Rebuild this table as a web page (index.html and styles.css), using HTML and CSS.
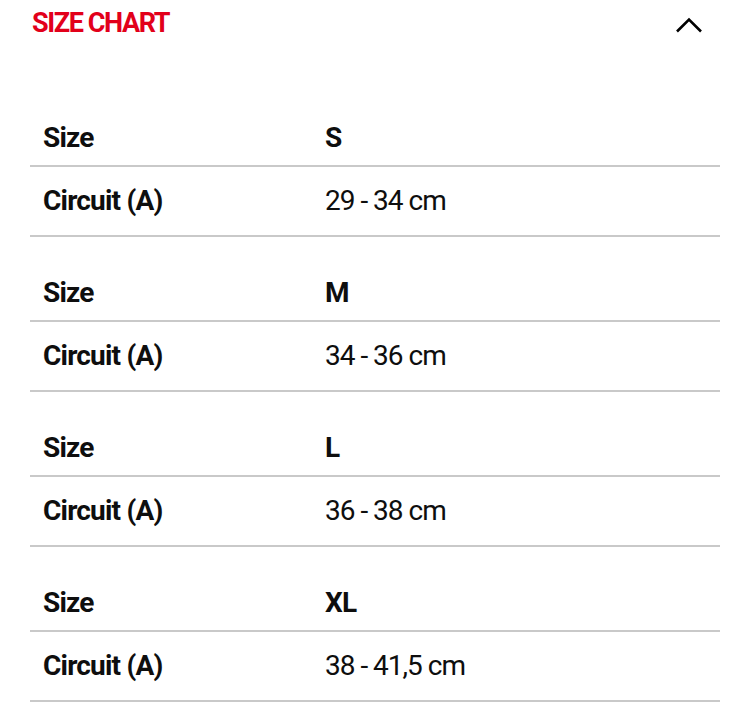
FILE: index.html
```html
<!DOCTYPE html>
<html>
<head>
<meta charset="utf-8">
<link rel="stylesheet" href="styles.css">
</head>
<body>
<div class="panel">
  <div class="head">
    <h2 class="title">SIZE CHART</h2>
    <svg class="chev" width="30" height="20" viewBox="0 0 30 20"><path d="M3 15.5 L15 3.5 L27 15.5" fill="none" stroke="#000" stroke-width="2.6" stroke-linecap="butt" stroke-linejoin="miter"/></svg>
  </div>
  <div class="table">
    <div class="group">
      <div class="row size"><span class="label">Size</span><span class="val strong">S</span></div>
      <div class="row circ"><span class="label">Circuit (A)</span><span class="val">29 - 34 cm</span></div>
    </div>
    <div class="group">
      <div class="row size"><span class="label">Size</span><span class="val strong">M</span></div>
      <div class="row circ"><span class="label">Circuit (A)</span><span class="val">34 - 36 cm</span></div>
    </div>
    <div class="group">
      <div class="row size"><span class="label">Size</span><span class="val strong">L</span></div>
      <div class="row circ"><span class="label">Circuit (A)</span><span class="val">36 - 38 cm</span></div>
    </div>
    <div class="group">
      <div class="row size"><span class="label">Size</span><span class="val strong">XL</span></div>
      <div class="row circ"><span class="label">Circuit (A)</span><span class="val">38 - 41,5 cm</span></div>
    </div>
  </div>
</div>
</body>
</html>
```
FILE: styles.css
```css
* { box-sizing: border-box; }
html, body { margin: 0; padding: 0; background: #fff; }
body { font-family: Roboto, "Liberation Sans", sans-serif; color: #0e0e0e; }
.panel { width: 750px; }
.head {
  display: flex;
  justify-content: space-between;
  align-items: flex-start;
  height: 82px;
  padding: 0 46px 0 32px;
}
.title {
  margin: 0;
  font-size: 27px;
  line-height: 46px;
  font-weight: 700;
  color: #e2001a;
  letter-spacing: -1.4px;
}
.chev { margin-top: 16px; }
.table { margin: 0 30px; }
.row {
  display: flex;
  border-bottom: 2px solid #c9c9c9;
  font-size: 28px;
}
.row.size { padding-top: 28px; height: 85px; line-height: 55px; }
.row.circ { height: 70px; line-height: 68px; }
.label { width: 295px; padding-left: 13px; font-weight: 700; letter-spacing: -0.8px; }
.val { font-weight: 400; letter-spacing: -1px; }
.val.strong { font-weight: 700; letter-spacing: -0.75px; }
```
